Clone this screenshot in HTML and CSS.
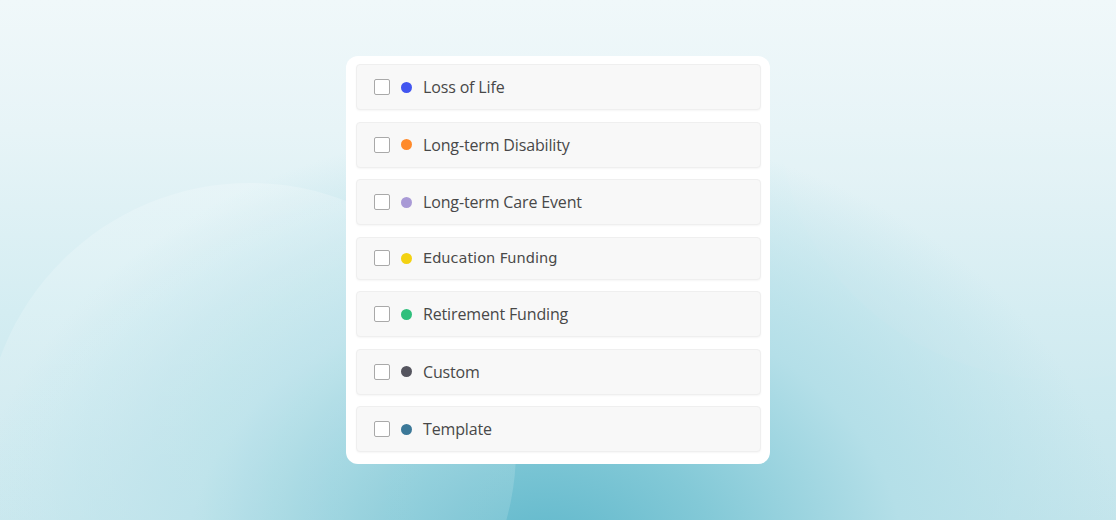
FILE: index.html
```html
<!DOCTYPE html>
<html lang="en">
<head>
<meta charset="utf-8">
<title>Risk categories</title>
<link rel="stylesheet" href="styles.css">
</head>
<body>
<div class="stage">
  <div class="glow glow-left"></div>
  <div class="glow glow-right"></div>
  <div class="card">
    <label class="row"><span class="box"></span><span class="dot blue"></span><span class="label">Loss of Life</span></label>
    <label class="row"><span class="box"></span><span class="dot orange"></span><span class="label">Long-term Disability</span></label>
    <label class="row"><span class="box"></span><span class="dot lavender"></span><span class="label">Long-term Care Event</span></label>
    <label class="row row-alt"><span class="box"></span><span class="dot yellow"></span><span class="label label-alt">Education Funding</span></label>
    <label class="row"><span class="box"></span><span class="dot green"></span><span class="label">Retirement Funding</span></label>
    <label class="row"><span class="box"></span><span class="dot slate"></span><span class="label">Custom</span></label>
    <label class="row"><span class="box"></span><span class="dot teal"></span><span class="label">Template</span></label>
  </div>
</div>
</body>
</html>
```
FILE: styles.css
```css
html, body {
  margin: 0;
  padding: 0;
  height: 100%;
}
body {
  font-family: "Open Sans", "Liberation Sans", sans-serif;
  overflow: hidden;
}
.stage {
  position: relative;
  width: 1116px;
  height: 520px;
  overflow: hidden;
  background:
    radial-gradient(ellipse 580px 440px at 545px 565px, #5cb6ca 0%, #83c9d7 30%, #b4dfe8 62%, rgba(214,238,243,0) 100%),
    linear-gradient(180deg, #f0f8fa 0%, #e7f4f7 25%, #d4edf2 60%, #c4e5ec 100%);
  display: flex;
  justify-content: center;
  align-items: flex-start;
  padding-top: 56px;
  box-sizing: border-box;
}
.glow {
  position: absolute;
  border-radius: 50%;
  pointer-events: none;
}
.glow-left {
  left: -16px;
  top: 183px;
  width: 532px;
  height: 532px;
  background: linear-gradient(180deg, rgba(255,255,255,0.2) 0%, rgba(255,255,255,0.14) 60%, rgba(255,255,255,0.1) 100%);
}
.glow-right {
  left: 780px;
  top: -140px;
  width: 560px;
  height: 520px;
  background: rgba(255,255,255,0.035);
}
.card {
  position: relative;
  width: 424px;
  box-sizing: border-box;
  background: #ffffff;
  border-radius: 12px;
  padding: 8px 9px 12px 10px;
  display: flex;
  flex-direction: column;
  gap: 11.5px;
}
.row {
  display: flex;
  align-items: center;
  height: 46px;
  box-sizing: border-box;
  background: #f8f8f8;
  border: 1px solid #efefef;
  border-radius: 4px;
  box-shadow: 0 1px 2px rgba(0,0,0,0.04);
  padding-left: 17px;
  cursor: pointer;
}
.row-alt {
  height: 43px;
}
.box {
  width: 16px;
  height: 16px;
  box-sizing: border-box;
  border: 1.5px solid #a9a9a9;
  border-radius: 2px;
  background: #fff;
  flex: none;
}
.dot {
  width: 11px;
  height: 11px;
  border-radius: 50%;
  margin-left: 11px;
  flex: none;
}
.blue { background: #4255f0; }
.orange { background: #ff8a2b; }
.lavender { background: #a99ad6; }
.yellow { background: #f3d212; }
.green { background: #2fbf7c; }
.slate { background: #55555f; }
.teal { background: #3b7898; }
.label {
  margin-left: 11px;
  font-size: 16px;
  color: #484848;
  letter-spacing: -0.15px;
  line-height: 20px;
}
.label-alt {
  font-family: "DejaVu Sans", "Liberation Sans", sans-serif;
  font-size: 14.5px;
  color: #4a4a4a;
  letter-spacing: 0;
}
```
